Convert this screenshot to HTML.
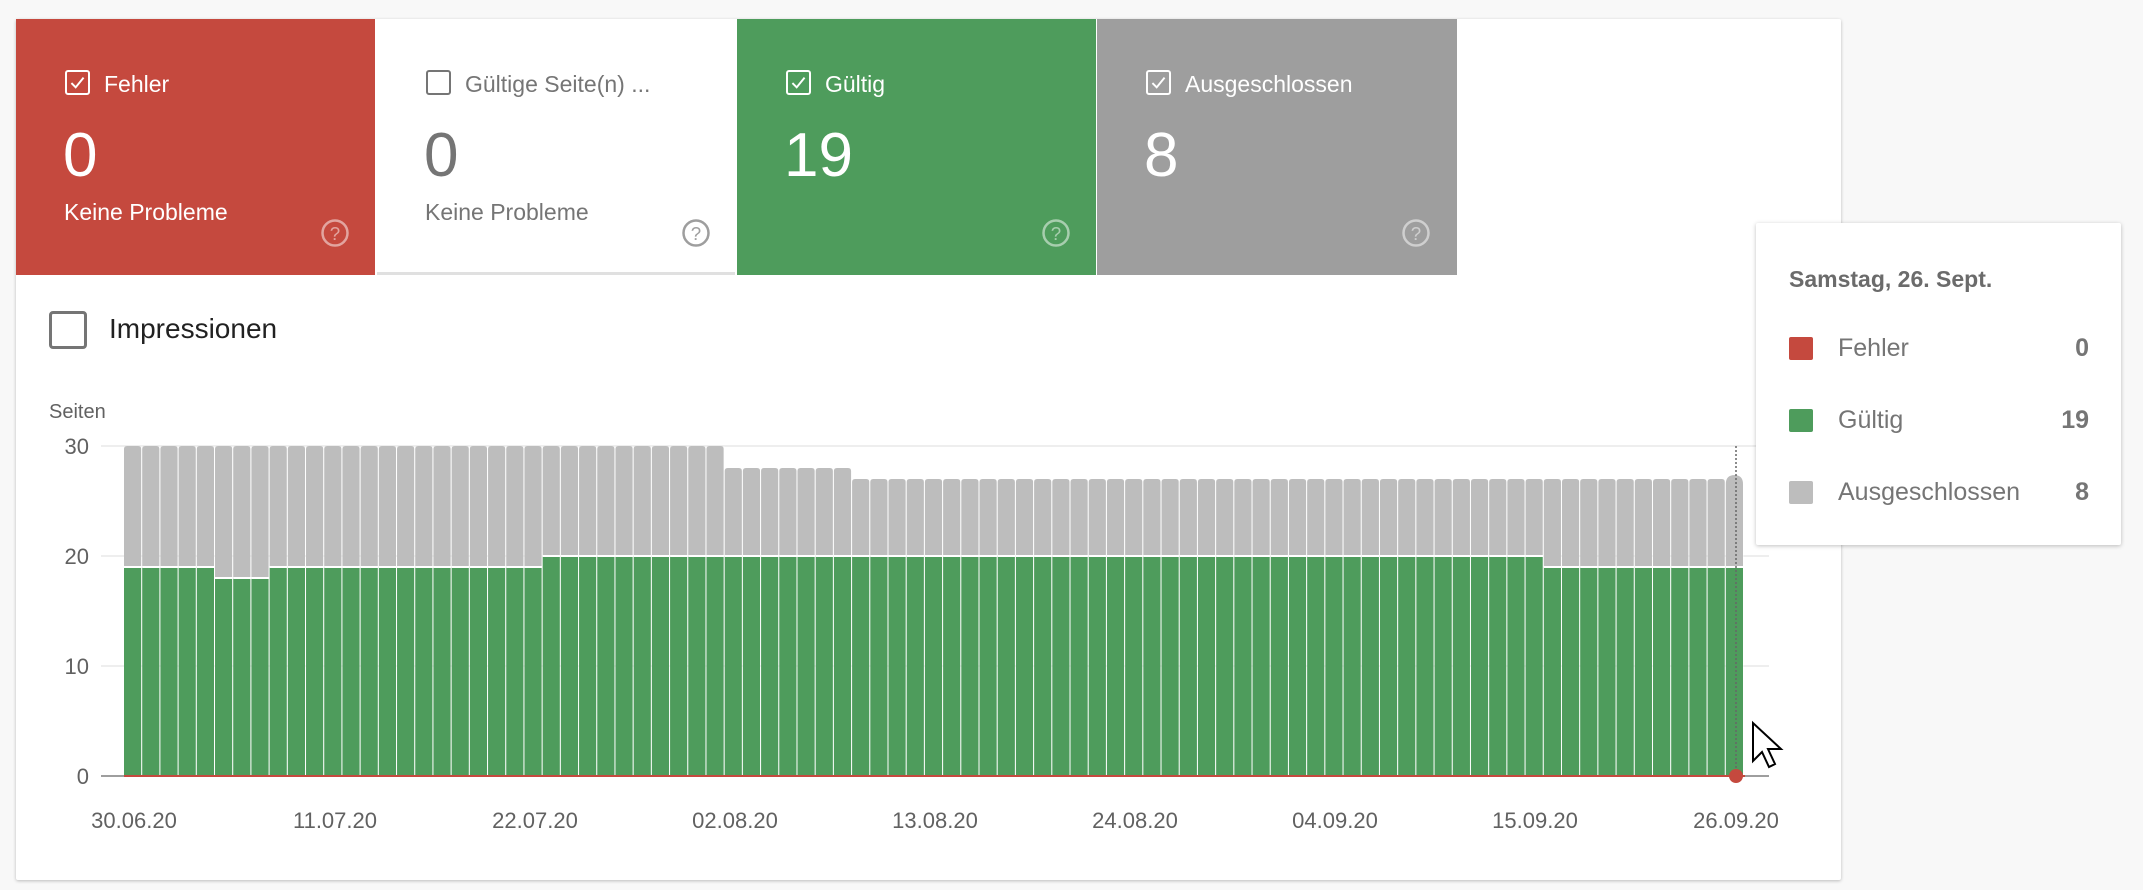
<!DOCTYPE html>
<html><head><meta charset="utf-8">
<style>
html,body{margin:0;padding:0;width:2143px;height:890px;background:#f8f8f8;overflow:hidden;font-family:"Liberation Sans",Roboto,sans-serif;}
.card{position:absolute;left:16px;top:19px;width:1825px;height:861px;background:#fff;box-shadow:0 1px 3px rgba(0,0,0,.25);border-radius:2px;}
.tile{position:absolute;top:19px;height:256px;width:359px;color:#fff;}
.cb{position:absolute;left:49px;top:51px;width:25px;height:25px;border:2px solid #fff;border-radius:3px;box-sizing:border-box;}
.cb svg{position:absolute;left:2px;top:2px;}
.lbl{position:absolute;left:88px;top:52px;font-size:23px;}
.num{position:absolute;left:47px;top:106px;font-size:62px;line-height:1;}
.sub{position:absolute;left:48px;top:180px;font-size:23px;}
.help{position:absolute;left:304px;top:199px;width:30px;height:30px;}
.tt{position:absolute;left:1756px;top:223px;width:365px;height:322px;background:#fff;box-shadow:0 1px 4px rgba(0,0,0,.25);border-radius:2px;color:#757575;}
.tt .row{position:absolute;left:33px;width:300px;font-size:25px;}
.tt .sq{position:absolute;left:0;top:3px;width:24px;height:23px;border-radius:2px;}
.tt .t{position:absolute;left:49px;top:0;}
.tt .v{position:absolute;right:0;top:0;font-weight:bold;}
</style></head><body>
<div class="card"></div>
<div class="tile" style="left:16px;background:#c5493e">
  <div class="cb"><svg width="17" height="17" viewBox="0 0 14 14"><path d="M2 7.5 L5.5 11 L12 3" stroke="#fff" stroke-width="1.6" fill="none"/></svg></div>
  <div class="lbl">Fehler</div><div class="num">0</div><div class="sub">Keine Probleme</div>
  <svg class="help" viewBox="0 0 24 24"><circle cx="12" cy="12" r="10" fill="none" stroke="rgba(255,255,255,.5)" stroke-width="2"/><text x="12" y="17.5" font-size="15" text-anchor="middle" fill="rgba(255,255,255,.5)" font-family="Liberation Sans">?</text></svg>
</div>
<div class="tile" style="left:377px;width:358px;background:#fff;color:#757575;border-bottom:3px solid #e0e0e0;height:253px">
  <div class="cb" style="border-color:#757575"></div>
  <div class="lbl">Gültige Seite(n) ...</div><div class="num">0</div><div class="sub">Keine Probleme</div>
  <svg class="help" viewBox="0 0 24 24"><circle cx="12" cy="12" r="10" fill="none" stroke="#9e9e9e" stroke-width="2"/><text x="12" y="17.5" font-size="15" text-anchor="middle" fill="#9e9e9e" font-family="Liberation Sans">?</text></svg>
</div>
<div class="tile" style="left:737px;background:#4e9c5c">
  <div class="cb"><svg width="17" height="17" viewBox="0 0 14 14"><path d="M2 7.5 L5.5 11 L12 3" stroke="#fff" stroke-width="1.6" fill="none"/></svg></div>
  <div class="lbl">Gültig</div><div class="num">19</div>
  <svg class="help" viewBox="0 0 24 24"><circle cx="12" cy="12" r="10" fill="none" stroke="rgba(255,255,255,.5)" stroke-width="2"/><text x="12" y="17.5" font-size="15" text-anchor="middle" fill="rgba(255,255,255,.5)" font-family="Liberation Sans">?</text></svg>
</div>
<div class="tile" style="left:1097px;width:360px;background:#9e9e9e">
  <div class="cb"><svg width="17" height="17" viewBox="0 0 14 14"><path d="M2 7.5 L5.5 11 L12 3" stroke="#fff" stroke-width="1.6" fill="none"/></svg></div>
  <div class="lbl">Ausgeschlossen</div><div class="num">8</div>
  <svg class="help" viewBox="0 0 24 24"><circle cx="12" cy="12" r="10" fill="none" stroke="rgba(255,255,255,.5)" stroke-width="2"/><text x="12" y="17.5" font-size="15" text-anchor="middle" fill="rgba(255,255,255,.5)" font-family="Liberation Sans">?</text></svg>
</div>
<div style="position:absolute;left:49px;top:311px;width:38px;height:38px;border:3px solid #757575;border-radius:4px;box-sizing:border-box"></div>
<div style="position:absolute;left:109px;top:313px;font-size:28px;color:#212121">Impressionen</div>

<svg id="ch" style="position:absolute;left:0;top:0" width="2143" height="890" font-family="Liberation Sans,sans-serif">
  <text x="49" y="418" font-size="20" fill="#616161">Seiten</text>
  <g font-size="22" fill="#616161" text-anchor="end">
    <text x="89" y="454">30</text><text x="89" y="564">20</text><text x="89" y="674">10</text><text x="89" y="784">0</text>
  </g>
  <g stroke="#eeeeee" stroke-width="2">
    <line x1="101" y1="446" x2="1769" y2="446"/><line x1="101" y1="556" x2="1769" y2="556"/><line x1="101" y1="666" x2="1769" y2="666"/>
  </g>
  <line x1="101" y1="776" x2="1769" y2="776" stroke="#9e9e9e" stroke-width="2"/>
  <g id="bars"></g>
  <line x1="124" y1="776" x2="1745" y2="776" stroke="#c5493e" stroke-width="2"/>
  <line x1="1736" y1="446" x2="1736" y2="776" stroke="#666" stroke-width="1.5" stroke-dasharray="2,2"/>
  <circle cx="1736" cy="776" r="7" fill="#c5493e"/>
  <g font-size="22" fill="#616161" text-anchor="middle">
    <text x="134" y="828">30.06.20</text><text x="335" y="828">11.07.20</text><text x="535" y="828">22.07.20</text>
    <text x="735" y="828">02.08.20</text><text x="935" y="828">13.08.20</text><text x="1135" y="828">24.08.20</text>
    <text x="1335" y="828">04.09.20</text><text x="1535" y="828">15.09.20</text><text x="1736" y="828">26.09.20</text>
  </g>
  <path d="M1753 723 L1753 761 L1762 752 L1769 767 L1775 764 L1768 749 L1781 749 Z" fill="#fff" stroke="#000" stroke-width="2"/>
</svg>
<script>
var g=document.getElementById('bars'),w=1620/89,s='';
for(var i=0;i<89;i++){
 var gr=19; if(i>=5&&i<=7)gr=18; if(i>=23&&i<78)gr=20;
 var t=30; if(i>=33)t=28; if(i>=40)t=27;
 var x=124+i*w, yt=776-t*11, yg=776-gr*11, r=(i==88)?9:3;
 if(i==88){yt-=4;}
 s+='<path d="M'+x+' '+yg+' V'+(yt+r)+' Q'+x+' '+yt+' '+(x+r)+' '+yt+' H'+(x+w-1-r)+' Q'+(x+w-1)+' '+yt+' '+(x+w-1)+' '+(yt+r)+' V'+yg+' Z" fill="#bdbdbd"/>';
 s+='<rect x="'+x+'" y="'+yg+'" width="'+(w-1)+'" height="'+(776-yg)+'" fill="#4e9c5c"/>';
 s+='<rect x="'+x+'" y="'+(yg-1)+'" width="'+w+'" height="2" fill="#fff"/>';
 s+='<rect x="'+(x+w-1)+'" y="'+yt+'" width="1" height="'+(776-yt)+'" fill="rgba(255,255,255,0.35)"/>';
}
g.innerHTML=s;
</script>
<div class="tt">
  <div style="position:absolute;left:33px;top:43px;font-size:23px;font-weight:bold;color:#6b6b6b">Samstag, 26. Sept.</div>
  <div class="row" style="top:111px"><div class="sq" style="background:#c5493e"></div><div class="t">Fehler</div><div class="v">0</div></div>
  <div class="row" style="top:183px"><div class="sq" style="background:#4e9c5c"></div><div class="t">Gültig</div><div class="v">19</div></div>
  <div class="row" style="top:255px"><div class="sq" style="background:#bdbdbd"></div><div class="t">Ausgeschlossen</div><div class="v">8</div></div>
</div>
</body></html>
